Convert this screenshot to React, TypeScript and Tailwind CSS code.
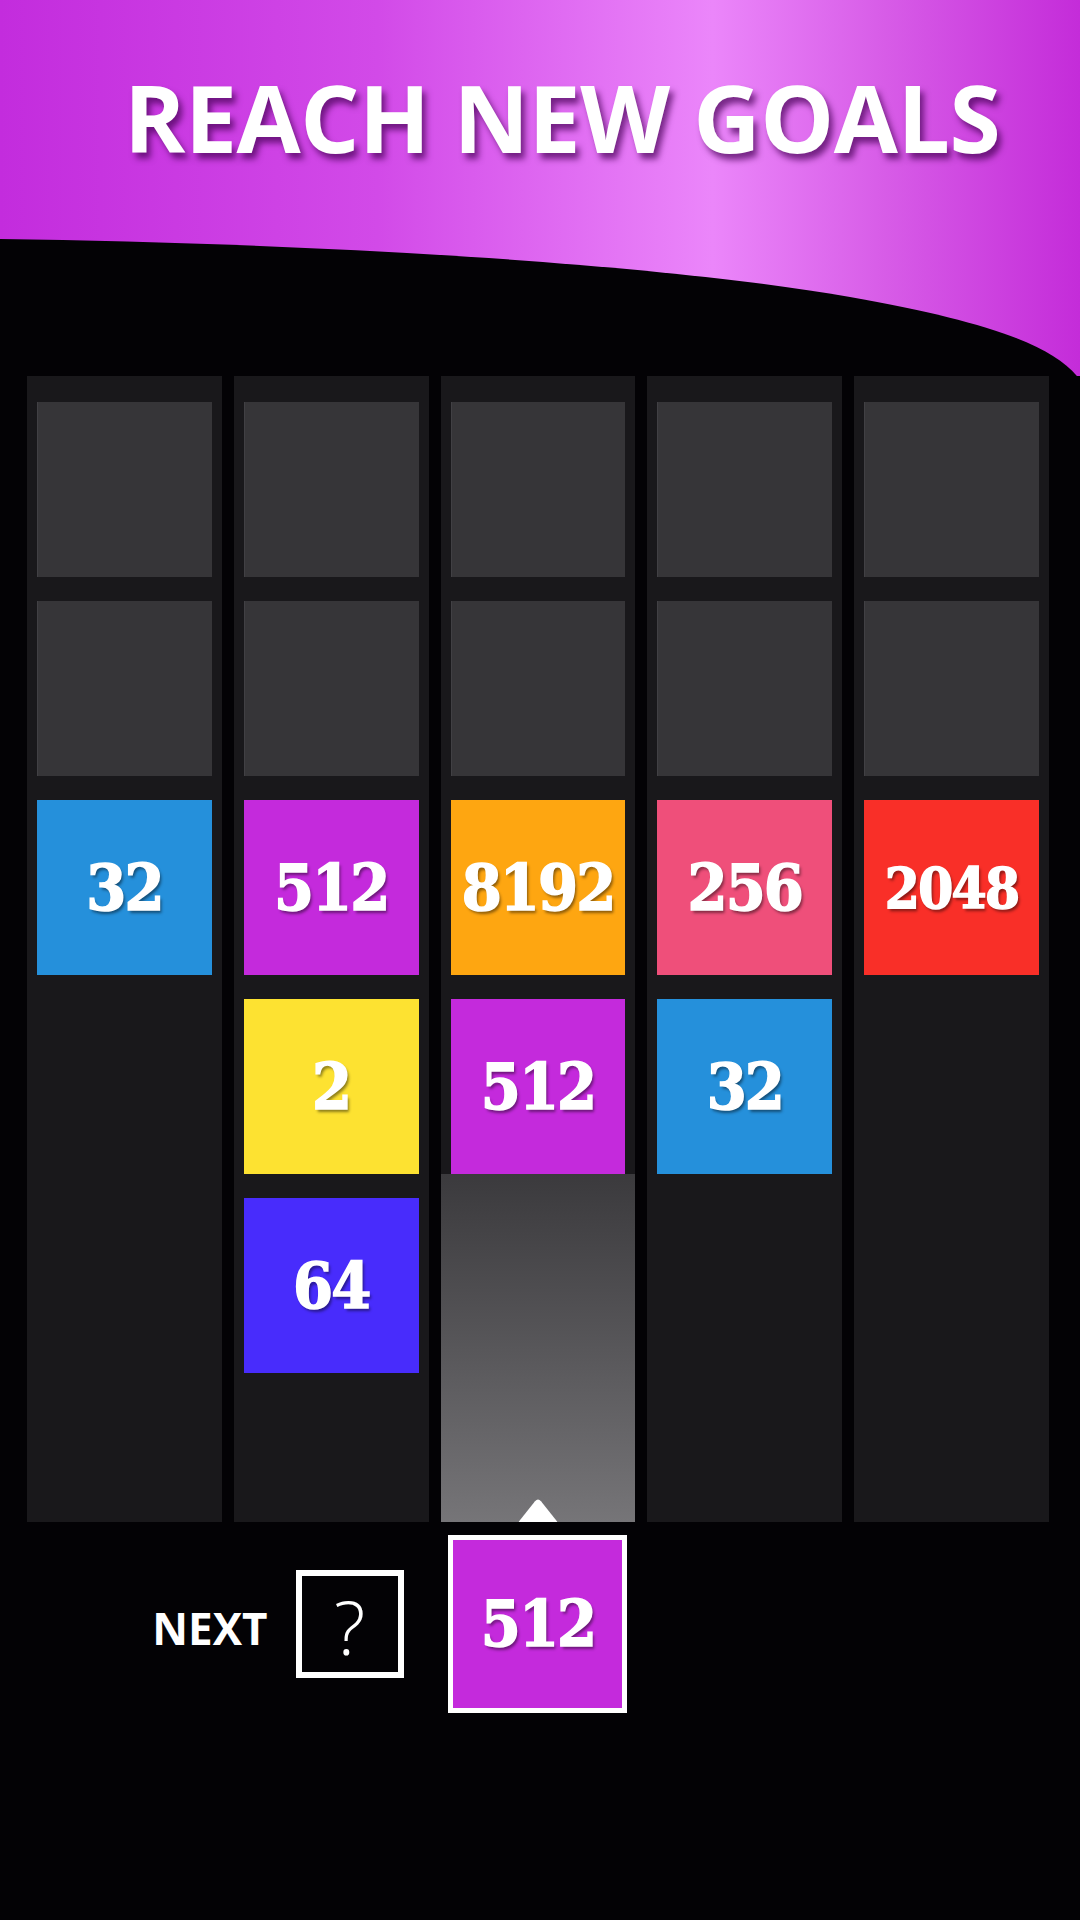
const TILE_BG: Record<number, string> = {
  2: "bg-[#fde231]",
  32: "bg-[#2590db]",
  64: "bg-[#482cfc]",
  256: "bg-[#ef4f7a]",
  512: "bg-[#c42adc]",
  2048: "bg-[#f92f28]",
  8192: "bg-[#fea611]",
};

// two empty slots on top of every column, then the stacked values
const COLUMNS: number[][] = [[32], [512, 2, 64], [8192, 512], [256, 32], [2048]];

const ACTIVE_COLUMN = 2;

function Num({ value }: { value: number }) {
  const size = value >= 1000 && value < 8000 ? "text-[56px]" : "text-[64px]";
  return (
    <span
      className={`${size} font-bold leading-none tracking-[-0.03em] text-white [-webkit-text-stroke:1.5px_#ffffff] [font-family:'DejaVu_Serif',serif] [font-stretch:condensed] [text-shadow:2px_3px_3px_rgba(0,0,0,0.45)]`}
    >
      {value}
    </span>
  );
}

function Tile({ value }: { value: number }) {
  return (
    <div className={`flex h-[175px] w-full items-center justify-center ${TILE_BG[value]}`}>
      <Num value={value} />
    </div>
  );
}

function EmptySlot() {
  return <div className="h-[175px] w-full bg-[#363538] shadow-[inset_1px_0_0_#414044]" />;
}

function UpArrow() {
  return (
    <svg width="39" height="23" viewBox="0 0 39 23" className="absolute bottom-0 left-1/2 -translate-x-1/2">
      <path d="M0 23 L16.5 2.2 Q19.5 -1.2 22.5 2.2 L39 23 Z" fill="#ffffff" />
    </svg>
  );
}

function Column({ values, active }: { values: number[]; active: boolean }) {
  return (
    <div className="flex h-[1146px] flex-col bg-[#19181b]">
      <div className="flex flex-col gap-[24px] px-[10px] pt-[26px]">
        <EmptySlot />
        <EmptySlot />
        {values.map((v, i) => (
          <Tile key={i} value={v} />
        ))}
      </div>
      {active ? (
        <div className="relative flex-1 bg-gradient-to-b from-[#3b3a3d] to-[#767578]">
          <UpArrow />
        </div>
      ) : (
        <div className="flex-1" />
      )}
    </div>
  );
}

export default function App() {
  return (
    <div className="h-[1920px] w-[1080px] overflow-hidden bg-[#030205] [font-family:'Open_Sans',sans-serif]">
      {/* purple banner with the swooping black edge */}
      <header className="relative h-[376px] bg-[linear-gradient(90deg,#c32cdd_0%,#d24ae8_35%,#eb86fa_66%,#d75ce7_82%,#c42cd9_100%)]">
        <svg
          className="absolute inset-0"
          width="1080"
          height="376"
          viewBox="0 0 1080 376"
          preserveAspectRatio="none"
        >
          <path d="M0 239 C300 243 650 262 850 297 C985 321 1055 345 1080 380 L0 380 Z" fill="#030205" />
        </svg>
        <h1 className="relative pl-[124px] pt-[71px] text-[93px] font-bold leading-none tracking-[-0.005em] text-white [text-shadow:4px_6px_6px_rgba(70,0,85,0.7)]">
          REACH NEW GOALS
        </h1>
      </header>

      {/* board */}
      <div className="grid grid-cols-5 gap-3 pl-[27px] pr-[31px]">
        {COLUMNS.map((vals, i) => (
          <Column key={i} values={vals} active={i === ACTIVE_COLUMN} />
        ))}
      </div>

      {/* next / current piece, the current one sits under the active column */}
      <div className="mt-[13px] grid grid-cols-5 items-center gap-3 pl-[27px] pr-[31px]">
        <div className="col-span-2 flex items-center justify-end pr-[25px]">
          <span className="mr-[28px] pt-[7px] text-[44px] font-bold leading-none text-white">NEXT</span>
          <div className="flex h-[108px] w-[108px] shrink-0 items-center justify-center border-[6px] border-white">
            <span className="pt-[6px] text-[74px] font-light leading-none text-white">?</span>
          </div>
        </div>
        <div className="h-[178px] w-[179px] justify-self-center border-[5px] border-white">
          <div className="flex h-full w-full items-center justify-center bg-[#c42adc]">
            <Num value={512} />
          </div>
        </div>
      </div>
    </div>
  );
}
